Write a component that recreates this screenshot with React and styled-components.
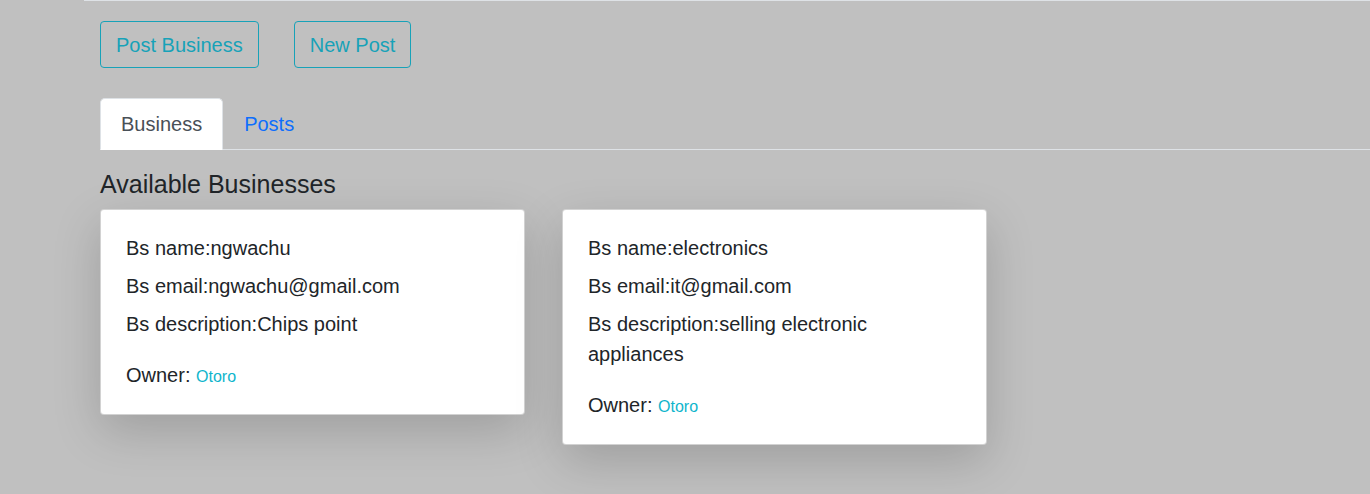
import React, { useState } from "react";
import styled, { createGlobalStyle } from "styled-components";

const GlobalStyle = createGlobalStyle`
  html, body {
    margin: 0;
    padding: 0;
    background: #c0c0c0;
    font-family: "Liberation Sans", Arial, sans-serif;
    color: #212529;
  }
`;

const Page = styled.div`
  min-height: 494px;
  margin-left: 84px;
  border-top: 1px solid #dee2e6;
  padding-left: 16px;
`;

const Toolbar = styled.div`
  display: flex;
  gap: 35px;
  padding-top: 20px;
`;

const OutlineButton = styled.button`
  font-family: inherit;
  font-size: 20px;
  line-height: 30px;
  padding: 8px 15px 7px;
  color: #17a2b8;
  background: transparent;
  border: 1px solid #17a2b8;
  border-radius: 4px;
  cursor: pointer;
`;

const Tabs = styled.div`
  display: flex;
  margin-top: 30px;
  border-bottom: 1px solid #dee2e6;
`;

const Tab = styled.button`
  font-family: inherit;
  font-size: 20px;
  line-height: 30px;
  padding: 10px 20px;
  margin-bottom: -1px;
  border: 1px solid ${p => (p.active ? "#dee2e6" : "transparent")};
  border-bottom-color: ${p => (p.active ? "#fff" : "transparent")};
  border-radius: 5px 5px 0 0;
  background: ${p => (p.active ? "#fff" : "transparent")};
  color: ${p => (p.active ? "#495057" : "#0d6efd")};
  cursor: pointer;
`;

const Heading = styled.h4`
  font-size: 25px;
  font-weight: 500;
  line-height: 29px;
  margin: 20px 0 10px;
`;

const CardRow = styled.div`
  display: flex;
  align-items: flex-start;
  gap: 37px;
`;

const Card = styled.div`
  width: 373px;
  padding: 23px 25px 22px;
  background: #fff;
  border: 1px solid rgba(0, 0, 0, 0.175);
  border-radius: 4px;
  box-shadow: 0 16px 48px rgba(0, 0, 0, 0.175);
`;

const Line = styled.p`
  font-size: 20px;
  line-height: 30px;
  margin: 0 0 8px;
`;

const Owner = styled.p`
  font-size: 20px;
  line-height: 30px;
  margin: 21px 0 0;
`;

const OwnerLink = styled.a`
  font-size: 16px;
  color: #0fb5cc;
  text-decoration: none;
`;

const businesses = [
  { name: "ngwachu", email: "ngwachu@gmail.com", description: "Chips point", owner: "Otoro" },
  { name: "electronics", email: "it@gmail.com", description: "selling electronic appliances", owner: "Otoro" }
];

export default function App() {
  const [tab, setTab] = useState("business");

  return (
    <>
      <GlobalStyle />
      <Page>
        <Toolbar>
          <OutlineButton>Post Business</OutlineButton>
          <OutlineButton>New Post</OutlineButton>
        </Toolbar>
        <Tabs>
          <Tab active={tab === "business"} onClick={() => setTab("business")}>
            Business
          </Tab>
          <Tab active={tab === "posts"} onClick={() => setTab("posts")}>
            Posts
          </Tab>
        </Tabs>
        <Heading>Available Businesses</Heading>
        <CardRow>
          {businesses.map(b => (
            <Card key={b.name}>
              <Line>Bs name:{b.name}</Line>
              <Line>Bs email:{b.email}</Line>
              <Line>Bs description:{b.description}</Line>
              <Owner>
                Owner: <OwnerLink href="#">{b.owner}</OwnerLink>
              </Owner>
            </Card>
          ))}
        </CardRow>
      </Page>
    </>
  );
}
